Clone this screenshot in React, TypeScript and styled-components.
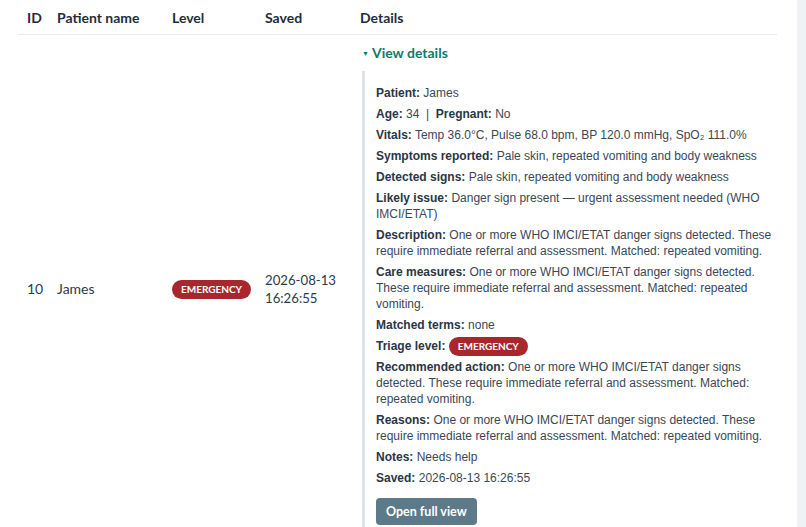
import React from "react";
import styled, { createGlobalStyle } from "styled-components";

const GlobalStyle = createGlobalStyle`
  html, body {
    margin: 0;
    padding: 0;
    background: #eef2f5;
    font-family: Lato, "Noto Sans", sans-serif;
    color: #1f2d3d;
  }
`;

const Page = styled.div`
  width: 797px;
  background: #ffffff;
  padding: 0 20px 40px 18px;
  box-sizing: border-box;
  min-height: 527px;
`;

const Table = styled.table`
  width: 759px;
  border-collapse: collapse;
  table-layout: fixed;
`;

const Col = styled.col<{ $w?: number }>`
  width: ${(p) => (p.$w ? `${p.$w}px` : "auto")};
`;

const Th = styled.th`
  text-align: left;
  font-size: 14px;
  font-weight: 700;
  line-height: 18px;
  padding: 9px 9px 7px;
  color: #1f2d3d;
  border-bottom: 1px solid #e6eaee;
`;

const Td = styled.td`
  font-size: 14px;
  line-height: 18px;
  padding: 0 9px;
  vertical-align: middle;
  color: #2b3a4a;
`;

const DateTd = styled(Td)`
  font-size: 13.2px;
`;

const DetailsTd = styled(Td)`
  vertical-align: top;
  padding: 9px 0 6px 9px;
`;

const Badge = styled.span`
  display: inline-block;
  background: #a8262c;
  color: #ffffff;
  font-family: Lato, sans-serif;
  font-size: 10px;
  font-weight: 700;
  line-height: 19px;
  padding: 0 9px;
  border-radius: 10px;
  vertical-align: middle;
`;

const InlineBadge = styled(Badge)`
  margin: -3px 0 -2px;
`;

const Summary = styled.div`
  display: flex;
  align-items: center;
  gap: 3px;
  color: #117a6b;
  font-weight: 700;
  font-size: 14px;
  line-height: 18px;
  padding-left: 2px;
`;

const Caret = styled.span`
  font-size: 7px;
`;

const Panel = styled.div`
  width: 400px;
  margin: 9px 0 0 2px;
  border-left: 3px solid #dfe3e8;
  padding: 14px 0 12px 11px;
  display: flex;
  flex-direction: column;
  gap: 5px;
  font-family: "Liberation Sans", Arial, sans-serif;
`;

const Item = styled.div`
  font-size: 12px;
  line-height: 16px;
  color: #3a4756;
`;

const Label = styled.b`
  color: #2a3645;
  font-weight: 700;
`;

const OpenButton = styled.button`
  align-self: flex-start;
  margin-top: 7px;
  background: #5d7a8a;
  color: #ffffff;
  border: none;
  border-radius: 4px;
  font-family: Lato, sans-serif;
  font-weight: 700;
  font-size: 12.5px;
  padding: 6px 10px 5px;
  line-height: 16px;
`;

const Field: React.FC<{ label: string; children: React.ReactNode }> = ({
  label,
  children,
}) => (
  <Item>
    <Label>{label}:</Label> {children}
  </Item>
);

const danger =
  "One or more WHO IMCI/ETAT danger signs detected. These require immediate referral and assessment. Matched: repeated vomiting.";

export default function App() {
  return (
    <>
      <GlobalStyle />
      <Page>
        <Table>
          <colgroup>
            <Col $w={30} />
            <Col $w={115} />
            <Col $w={93} />
            <Col $w={95} />
            <Col />
          </colgroup>
          <thead>
            <tr>
              <Th>ID</Th>
              <Th>Patient name</Th>
              <Th>Level</Th>
              <Th>Saved</Th>
              <Th>Details</Th>
            </tr>
          </thead>
          <tbody>
            <tr>
              <Td>10</Td>
              <Td>James</Td>
              <Td>
                <Badge>EMERGENCY</Badge>
              </Td>
              <DateTd>
                2026-08-13
                <br />
                16:26:55
              </DateTd>
              <DetailsTd>
                <Summary>
                  <Caret>▼</Caret>View details
                </Summary>
                <Panel>
                  <Field label="Patient">James</Field>
                  <Item>
                    <Label>Age:</Label> 34&nbsp; | &nbsp;<Label>Pregnant:</Label> No
                  </Item>
                  <Field label="Vitals">
                    Temp 36.0°C, Pulse 68.0 bpm, BP 120.0 mmHg, SpO₂ 111.0%
                  </Field>
                  <Field label="Symptoms reported">
                    Pale skin, repeated vomiting and body weakness
                  </Field>
                  <Field label="Detected signs">
                    Pale skin, repeated vomiting and body weakness
                  </Field>
                  <Field label="Likely issue">
                    Danger sign present — urgent assessment needed (WHO IMCI/ETAT)
                  </Field>
                  <Field label="Description">{danger}</Field>
                  <Field label="Care measures">{danger}</Field>
                  <Field label="Matched terms">none</Field>
                  <Field label="Triage level">
                    <InlineBadge>EMERGENCY</InlineBadge>
                  </Field>
                  <Field label="Recommended action">{danger}</Field>
                  <Field label="Reasons">{danger}</Field>
                  <Field label="Notes">Needs help</Field>
                  <Field label="Saved">2026-08-13 16:26:55</Field>
                  <OpenButton>Open full view</OpenButton>
                </Panel>
              </DetailsTd>
            </tr>
          </tbody>
        </Table>
      </Page>
    </>
  );
}
